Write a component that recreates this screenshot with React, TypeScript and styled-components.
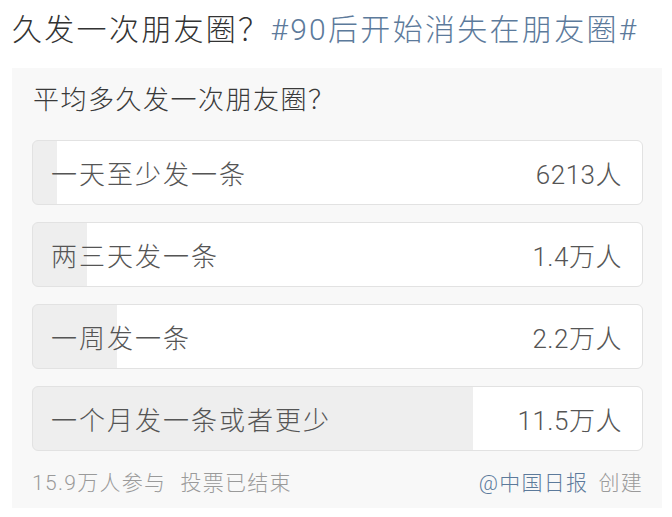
import styled, { createGlobalStyle } from 'styled-components';

const GlobalStyle = createGlobalStyle`
	html, body {
		margin: 0;
		padding: 0;
		background: #ffffff;
	}
	body {
		font-family: Roboto, 'Noto Sans CJK SC', sans-serif;
		-webkit-font-smoothing: antialiased;
	}
`;

const Page = styled.div`
	display: flex;
	flex-direction: column;
	width: 672px;
	height: 517px;
	overflow: hidden;
`;

const Headline = styled.h1`
	margin: 12px 0 0 12px;
	font-size: 30px;
	line-height: 36px;
	font-weight: 300;
	color: #333333;
	letter-spacing: 2.3px;
	white-space: nowrap;
`;

const Topic = styled.span`
	color: #5c7a9b;
`;

const Panel = styled.section`
	display: flex;
	flex-direction: column;
	margin: 20px 10px 0 12px;
	padding: 14px 19px 10px 20px;
	background: #f8f8f8;
`;

const Question = styled.h2`
	margin: 0 0 22px 1px;
	font-size: 26px;
	line-height: 36px;
	font-weight: 300;
	color: #3a3a3a;
	letter-spacing: 1.5px;
`;

const Options = styled.div`
	display: flex;
	flex-direction: column;
	gap: 17px;
`;

const Option = styled.div<{ $pct: number }>`
	display: flex;
	align-items: center;
	justify-content: space-between;
	height: 65px;
	box-sizing: border-box;
	padding: 0 20px 0 18px;
	border: 1px solid #e2e2e2;
	border-radius: 6px;
	background: linear-gradient(
		to right,
		#eeeeee 0,
		#eeeeee ${(p) => p.$pct}%,
		#ffffff ${(p) => p.$pct}%,
		#ffffff 100%
	);
	font-size: 26px;
	font-weight: 300;
	color: #555555;
`;

const Label = styled.span`
	letter-spacing: 2px;
`;

const Count = styled.span`
	letter-spacing: 0.5px;
`;

const Footer = styled.div`
	display: flex;
	align-items: center;
	justify-content: space-between;
	margin-top: 17px;
	font-size: 21px;
	line-height: 30px;
	font-weight: 300;
	color: #9a9a9a;
	letter-spacing: 1.3px;
`;

const Meta = styled.span`
	display: flex;
	gap: 14px;
`;

const Creator = styled.span`
	display: flex;
	gap: 10px;
`;

const Author = styled.span`
	color: #5c7a9b;
`;

const total = 159000;

const options = [
	{ label: '一天至少发一条', count: '6213人', value: 6213 },
	{ label: '两三天发一条', count: '1.4万人', value: 14000 },
	{ label: '一周发一条', count: '2.2万人', value: 22000 },
	{ label: '一个月发一条或者更少', count: '11.5万人', value: 115000 }
];

export default function App() {
	return (
		<Page>
			<GlobalStyle />
			<Headline>
				久发一次朋友圈？<Topic>#90后开始消失在朋友圈#</Topic>
			</Headline>
			<Panel>
				<Question>平均多久发一次朋友圈？</Question>
				<Options>
					{options.map((o) => (
						<Option key={o.label} $pct={(o.value / total) * 100}>
							<Label>{o.label}</Label>
							<Count>{o.count}</Count>
						</Option>
					))}
				</Options>
				<Footer>
					<Meta>
						<span>15.9万人参与</span>
						<span>投票已结束</span>
					</Meta>
					<Creator>
						<Author>@中国日报</Author>
						<span>创建</span>
					</Creator>
				</Footer>
			</Panel>
		</Page>
	);
}
